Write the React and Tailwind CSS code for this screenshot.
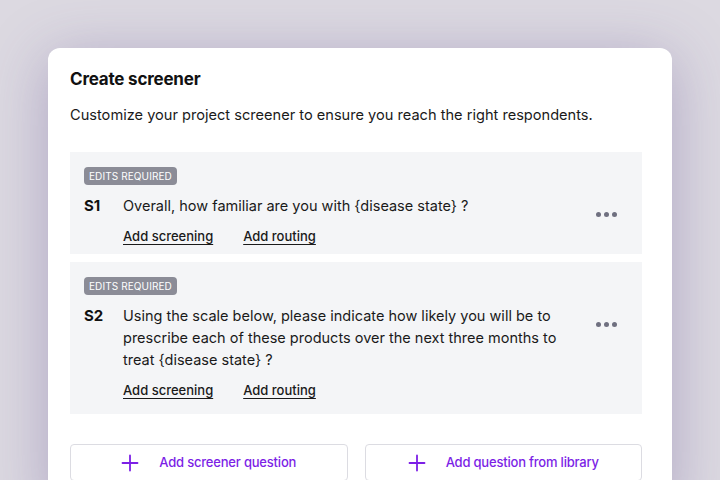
import React from "react";

const questions = [
  {
    id: "S1",
    text: "Overall, how familiar are you with {disease state} ?",
    pb: "pb-[8px]",
  },
  {
    id: "S2",
    text: "Using the scale below, please indicate how likely you will be to prescribe each of these products over the next three months to treat {disease state} ?",
    pb: "pb-[14px]",
  },
];

function Plus() {
  return (
    <svg width="18" height="18" viewBox="0 0 18 18" fill="none" stroke="#7c1fe6" strokeWidth="1.8" strokeLinecap="round">
      <path d="M9 1.5v15M1.5 9h15" />
    </svg>
  );
}

function QuestionCard({ q }) {
  return (
    <div className={`bg-[#f4f5f7] pl-[14px] pr-[25px] pt-[15px] ${q.pb} flex items-start`}>
      <div className="flex-1">
        <div className="flex">
          <span className="bg-[#8b8c97] text-white text-[10px] leading-[18px] tracking-[0.1px] px-[5px] rounded-[4px] uppercase">
            Edits required
          </span>
        </div>
        <div className="flex mt-[10px]">
          <div className="w-[39px] font-bold text-[15px] leading-[22px] text-[#111]">{q.id}</div>
          <div className="flex-1 max-w-[450px]">
            <p className="text-[14.5px] leading-[22px] text-[#1a1a1a]">{q.text}</p>
            <div className="flex gap-[30px] mt-[9px] text-[13px] leading-[20px] font-medium text-[#1a1a1a]">
              <span className="underline underline-offset-[3px]">Add screening</span>
              <span className="underline underline-offset-[3px]">Add routing</span>
            </div>
          </div>
        </div>
      </div>
      <div className="flex gap-[3px] mt-[45px]">
        <span className="w-[5px] h-[5px] rounded-full bg-[#6f7080]" />
        <span className="w-[5px] h-[5px] rounded-full bg-[#6f7080]" />
        <span className="w-[5px] h-[5px] rounded-full bg-[#6f7080]" />
      </div>
    </div>
  );
}

export default function App() {
  return (
    <div
      className="w-[720px] h-[480px] overflow-hidden bg-[#dcd9e1] pt-[48px] px-[48px]"
      style={{ fontFamily: "Inter, 'Noto Sans', sans-serif" }}
    >
      <div className="bg-white rounded-t-[12px] h-[460px] pl-[22px] pr-[30px] pt-[20px] shadow-[0_10px_60px_rgba(90,70,140,0.35)]">
        <h1 className="text-[17px] leading-[22px] font-bold text-[#111] tracking-[-0.2px]">Create screener</h1>
        <p className="mt-[15px] text-[14.6px] leading-[20px] text-[#1a1a1a]">
          Customize your project screener to ensure you reach the right respondents.
        </p>
        <div className="mt-[27px] flex flex-col gap-[8px]">
          {questions.map((q) => (
            <QuestionCard key={q.id} q={q} />
          ))}
        </div>
        <div className="mt-[30px] flex gap-[17px]">
          <button className="flex-1 h-[37px] border border-[#dcdce2] rounded-[4px] flex items-center justify-center gap-[20px] text-[13px] tracking-[-0.2px] font-medium text-[#7c1fe6]">
            <Plus />
            Add screener question
          </button>
          <button className="flex-1 h-[37px] border border-[#dcdce2] rounded-[4px] flex items-center justify-center gap-[20px] text-[13px] tracking-[-0.2px] font-medium text-[#7c1fe6]">
            <Plus />
            Add question from library
          </button>
        </div>
      </div>
    </div>
  );
}
